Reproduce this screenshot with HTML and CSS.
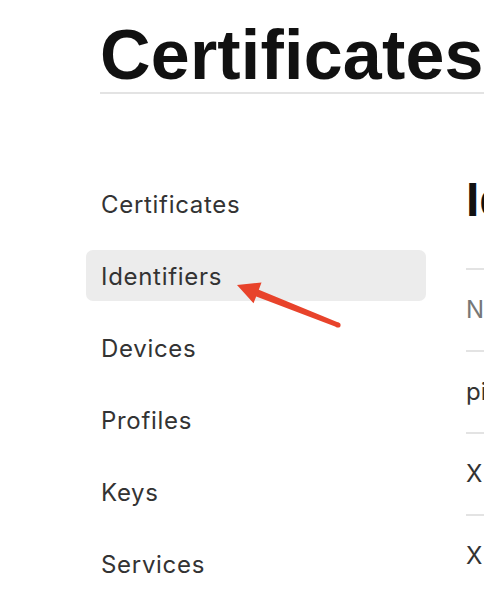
FILE: index.html
```html
<!DOCTYPE html>
<html>
<head>
<meta charset="utf-8">
<link rel="stylesheet" href="styles.css">
</head>
<body>
<div class="page">
  <header class="top">
    <h1 class="title">Certificates</h1>
  </header>
  <div class="main">
    <nav class="nav">
      <div class="nav-item">Certificates</div>
      <div class="nav-item active">Identifiers</div>
      <div class="nav-item">Devices</div>
      <div class="nav-item">Profiles</div>
      <div class="nav-item">Keys</div>
      <div class="nav-item">Services</div>
    </nav>
    <section class="content">
      <h2 class="content-title">Identifiers</h2>
      <div class="table">
        <div class="row head">NAME</div>
        <div class="row">pipeline</div>
        <div class="row">X Wildcard</div>
        <div class="row">X com</div>
      </div>
    </section>
  </div>
  <svg class="arrow" width="484" height="594" viewBox="0 0 484 594">
    <polygon fill="#e8432b" points="237,285 261.5,282.5 258.8,289.8 338.9,322.7 337.1,327.3 256.2,296.4 253.5,303.3"/>
    <circle cx="338" cy="325" r="2.6" fill="#e8432b"/>
  </svg>
</div>
</body>
</html>
```
FILE: styles.css
```css
html, body {
  margin: 0;
  padding: 0;
  background: #ffffff;
  overflow: hidden;
}
.page {
  position: relative;
  width: 484px;
  height: 594px;
  overflow: hidden;
}
.top {
  padding: 20px 0 0 100px;
}
.title {
  margin: 0;
  font-family: "Liberation Sans", Arial, sans-serif;
  font-weight: 700;
  font-size: 70px;
  line-height: 70px;
  color: #111111;
  white-space: nowrap;
  letter-spacing: 0.2px;
  padding-bottom: 2px;
  border-bottom: 2px solid #e3e3e3;
  width: 420px;
}
.main {
  display: flex;
  gap: 40px;
  padding: 84px 0 0 86px;
}
.nav {
  width: 340px;
  flex: none;
  display: flex;
  flex-direction: column;
  gap: 21px;
}
.nav-item {
  height: 49px;
  padding: 2px 15px 0;
  line-height: 49px;
  font-family: Inter, "Liberation Sans", sans-serif;
  font-size: 24px;
  letter-spacing: 0.7px;
  color: #333333;
  border-radius: 7px;
  white-space: nowrap;
}
.nav-item.active {
  background: #ececec;
}
.content {
  flex: none;
  width: 300px;
  font-family: Inter, "Liberation Sans", sans-serif;
}
.content-title {
  margin: -6px 0 0 0;
  font-family: "Liberation Sans", Arial, sans-serif;
  font-weight: 700;
  font-size: 48px;
  line-height: 56px;
  color: #111111;
  white-space: nowrap;
}
.table {
  margin-top: 40px;
}
.row {
  border-top: 2px solid #e3e3e3;
  height: 80px;
  line-height: 80px;
  font-size: 24px;
  color: #333333;
  white-space: nowrap;
}
.row.head {
  color: #777777;
}
.arrow {
  position: absolute;
  left: 0;
  top: 0;
  pointer-events: none;
}
```
